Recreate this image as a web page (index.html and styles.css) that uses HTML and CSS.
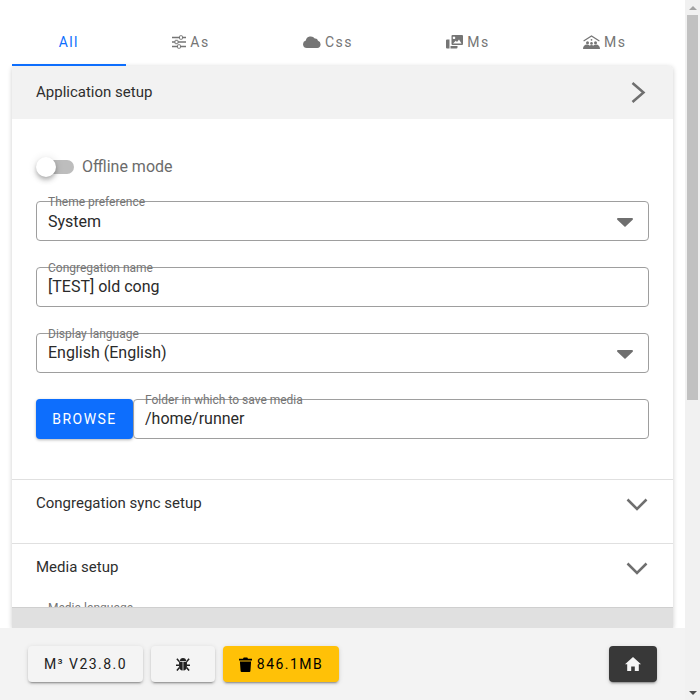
FILE: index.html
```html
<!DOCTYPE html>
<html lang="en">
<head>
<meta charset="utf-8">
<title>Settings</title>
<link rel="stylesheet" href="styles.css">
</head>
<body>
<div class="window">
  <div class="main">
    <div class="scroll-area">
      <nav class="tabs">
        <div class="tab active"><span>All</span></div>
        <div class="tab">
          <svg class="tab-icon" viewBox="0 0 14 14"><path d="M0 2.500h7.500M10.500 2.500H14M0 7h3M6 7h8M0 11.500h5.500M8.500 11.500H14" fill="none" stroke="currentColor" stroke-width="1.400"/><rect x="7.500" y=".8" width="3" height="3.400" rx=".6" fill="none" stroke="currentColor"/><rect x="3" y="5.300" width="3" height="3.400" rx=".6" fill="none" stroke="currentColor"/><rect x="5.500" y="9.800" width="3" height="3.400" rx=".6" fill="none" stroke="currentColor"/></svg>
          <span>As</span>
        </div>
        <div class="tab">
          <svg class="tab-icon cloud" viewBox="0 0 18 12"><path d="M3.800 12a3.800 3.800 0 0 1-1-7.450A5 5 0 0 1 11.800 2.600a3 3 0 0 1 3.200 2.200A3.700 3.700 0 0 1 14.300 12z" fill="currentColor"/></svg>
          <span>Css</span>
        </div>
        <div class="tab">
          <svg class="tab-icon wide" viewBox="0 0 17 14"><path d="M0 5.500A1 1 0 0 1 1 4.500h2.500v9H1a1 1 0 0 1-1-1zM4.500 11h7v1.500a1 1 0 0 1-1 1h-6z" fill="currentColor"/><path fill-rule="evenodd" d="M5.500 1a1 1 0 0 1 1-1H16a1 1 0 0 1 1 1v8a1 1 0 0 1-1 1H6.500a1 1 0 0 1-1-1zM7 8.500h8.500L13 4.500 11 7 9.800 5.800zM8 1.500a1.300 1.300 0 1 0 .01 0z" fill="currentColor"/></svg>
          <span>Ms</span>
        </div>
        <div class="tab">
          <svg class="tab-icon wide" viewBox="0 0 17 14"><path d="M.6 6 8.500 1l7.900 5" fill="none" stroke="currentColor" stroke-width="1.200"/><circle cx="8.500" cy="4.800" r=".9" fill="currentColor"/><circle cx="4.500" cy="7.800" r="1.500" fill="currentColor"/><circle cx="12.500" cy="7.800" r="1.500" fill="currentColor"/><circle cx="8.500" cy="8.400" r="1.300" fill="currentColor"/><path d="M0 14c0-2.800 1.800-4.500 4-4.500s4 1.700 4 4.500zM9 14c0-2.800 1.800-4.500 4-4.500s4 1.700 4 4.500zM5.500 14c0-2.800 1.300-4 3-4s3 1.200 3 4z" fill="currentColor"/></svg>
          <span>Ms</span>
        </div>
      </nav>
      <div class="accordion">
        <section class="panel">
          <header class="panel-head shaded">
            <h2>Application setup</h2>
            <svg class="chevron" viewBox="0 0 24 24"><path d="M7.500 3 18.500 12.500 7.500 22" fill="none" stroke="currentColor" stroke-width="2.500"/></svg>
          </header>
          <div class="panel-body">
            <div class="switch-row">
              <div class="switch"><span class="knob"></span></div>
              <span class="switch-label">Offline mode</span>
            </div>
            <div class="field">
              <span class="field-label">Theme preference</span>
              <span class="field-value lowered">System</span>
              <svg class="caret" viewBox="0 0 16 9"><path d="M1 0h14a1 1 0 0 1 .7 1.700L8 9 .3 1.700A1 1 0 0 1 1 0z" fill="currentColor"/></svg>
            </div>
            <div class="field">
              <span class="field-label">Congregation name</span>
              <span class="field-value">[TEST] old cong</span>
            </div>
            <div class="field">
              <span class="field-label">Display language</span>
              <span class="field-value">English (English)</span>
              <svg class="caret" viewBox="0 0 16 9"><path d="M1 0h14a1 1 0 0 1 .7 1.700L8 9 .3 1.700A1 1 0 0 1 1 0z" fill="currentColor"/></svg>
            </div>
            <div class="field-group">
              <button class="browse" type="button">BROWSE</button>
              <div class="field grow">
                <span class="field-label">Folder in which to save media</span>
                <span class="field-value">/home/runner</span>
              </div>
            </div>
          </div>
        </section>
        <section class="panel fixed">
          <header class="panel-head compact">
            <h2>Congregation sync setup</h2>
            <svg class="chevron" viewBox="0 0 24 24"><path d="M2.500 7.500 12 17l9.500-9.500" fill="none" stroke="currentColor" stroke-width="2.500"/></svg>
          </header>
        </section>
        <section class="panel fixed">
          <header class="panel-head compact">
            <h2>Media setup</h2>
            <svg class="chevron" viewBox="0 0 24 24"><path d="M2.500 7.500 12 17l9.500-9.500" fill="none" stroke="currentColor" stroke-width="2.500"/></svg>
          </header>
          <div class="clipped-label"><span class="field-label">Media language</span></div>
        </section>
        <div class="accordion-foot"></div>
      </div>
    </div>
    <footer class="footer">
      <div class="footer-left">
        <button class="btn light version" type="button">M³ V23.8.0</button>
        <button class="btn light bug" type="button" aria-label="Debug">
          <svg class="btn-icon" viewBox="0 0 16 16"><path d="M4.500 4.500a3.500 3.500 0 0 1 7 0z" fill="currentColor"/><path d="M3.500 5.500h4.100V15.500C5 15.300 3.500 13 3.500 10.500zM8.400 5.500h4.100v5c0 2.500-1.500 4.800-4.100 5z" fill="currentColor"/><path d="M1 2 4 5.500M15 2 12 5.500M0 9.300h3.800M12.200 9.300H16M1 15.500 4 12M15 15.500 12 12" fill="none" stroke="currentColor" stroke-width="1.700"/></svg>
        </button>
        <button class="btn amber" type="button">
          <svg class="trash" viewBox="0 0 13 15"><path d="M0 1.700h4L4.700.4h3.600l.7 1.300h4v1.700H0zM.9 4.400h11.200l-.7 9.700a1 1 0 0 1-1 .9H2.600a1 1 0 0 1-1-.9z" fill="currentColor"/></svg>
          <span>846.1MB</span>
        </button>
      </div>
      <button class="btn dark" type="button" aria-label="Home">
        <svg class="home" viewBox="0 0 16 14"><path d="M8 0 16 7.200h-2.200V14H9.800V9.500H6.200V14H2.200V7.200H0z" fill="currentColor"/></svg>
      </button>
    </footer>
  </div>
  <div class="scrollbar">
    <span class="arrow up"></span>
    <div class="track"><div class="thumb"></div></div>
    <span class="arrow down"></span>
  </div>
</div>
</body>
</html>
```

FILE: styles.css
```css
* { box-sizing: border-box; }
html, body { margin: 0; height: 100%; overflow: hidden; }
body { font-family: Roboto, "Liberation Sans", sans-serif; color: #212121; background: #fff; }
button { font-family: inherit; border: 0; cursor: pointer; }

.window { display: flex; width: 700px; height: 700px; }
.main { width: 685px; height: 700px; display: flex; flex-direction: column; }
.scroll-area { height: 628px; overflow: hidden; padding: 18px 12px 0; }

.tabs { display: flex; height: 48px; }
.tab {
  flex: 1 1 auto; display: flex; align-items: center; justify-content: center; gap: 4px;
  color: #757575; font-size: 14px; font-weight: 450; letter-spacing: 1.45px;
  border-bottom: 2px solid transparent; padding-top: 2px;
}
.tab.active { color: #0d6efd; border-bottom-color: #0d6efd; }
.tab-icon { width: 14px; height: 14px; }
.tab-icon.cloud { width: 18px; height: 12px; }
.tab-icon.wide { width: 17px; height: 14px; }

.accordion { border-radius: 4px 4px 0 0; box-shadow: 0 1px 5px rgba(0,0,0,.2); display: flex; flex-direction: column; height: 562px; overflow: hidden; background: #e0e0e0; }
.panel { background: #fff; }
.panel + .panel { border-top: 1px solid #e0e0e0; }
.panel.fixed { height: 64px; overflow: hidden; }
.panel-head { display: flex; align-items: center; justify-content: space-between; height: 53px; padding: 0 24px 1px; }
.panel-head.compact { height: 48px; padding-bottom: 0; }
.panel-head.compact h2 { padding-bottom: 2px; }
.panel-head.shaded { background: #f2f2f2; }
.panel-head h2 { margin: 0; font-size: 15px; font-weight: 400; line-height: 24px; color: #2e2e2e; }
.chevron { width: 24px; height: 24px; color: #6f6f6f; }
.panel-body { padding: 32px 24px 40px; }

.switch-row { display: flex; align-items: center; height: 32px; margin-bottom: 18px; }
.switch { position: relative; width: 36px; height: 14px; border-radius: 7px; background: #bdbdbd; margin: 0 8px 0 2px; }
.knob { position: absolute; left: -2px; top: -3px; width: 20px; height: 20px; border-radius: 50%; background: #fff; box-shadow: 0 2px 4px -1px rgba(0,0,0,.2), 0 4px 5px rgba(0,0,0,.14), 0 1px 10px rgba(0,0,0,.12); }
.switch-label { font-size: 16px; color: #6b6b6b; padding-bottom: 2px; }

.field { position: relative; height: 40px; border: 1px solid #9e9e9e; border-radius: 4px; padding: 0 11px; display: flex; align-items: center; margin-bottom: 26px; }
.field-label { position: absolute; left: 11px; top: -7px; font-size: 12px; line-height: 14px; color: #757575; white-space: nowrap; }
.field-value { font-size: 16px; line-height: 24px; color: #2a2a2a; }
.field-value.lowered { padding-top: 2px; }
.caret { position: absolute; right: 15px; top: 16px; width: 16px; height: 9px; color: #6f6f6f; }

.field-group { display: flex; }
.field-group .field { margin-bottom: 0; }
.field.grow { flex: 1; border-radius: 4px; }
.browse { width: 97px; height: 40px; border-radius: 4px; background: #0d6efd; color: #fff; font-size: 14px; font-weight: 450; letter-spacing: 1.45px; box-shadow: 0 1px 3px rgba(0,0,0,.3); }

.clipped-label { position: relative; height: 1px; }
.clipped-label .field-label { left: 36px; top: 9px; }
.accordion-foot { flex: 1; border-top: 1px solid #cfcfcf; background: #e0e0e0; }

.footer { height: 72px; background: #f3f3f3; display: flex; align-items: center; justify-content: space-between; padding: 0 28px; }
.footer-left { display: flex; gap: 8px; }
.btn { height: 36px; border-radius: 4px; font-size: 14px; font-weight: 450; letter-spacing: 1.45px; display: flex; align-items: center; justify-content: center; box-shadow: 0 3px 1px -2px rgba(0,0,0,.2), 0 2px 2px rgba(0,0,0,.14), 0 1px 5px rgba(0,0,0,.12); }
.btn.light { background: #f4f4f4; color: #212121; }
.version { width: 115px; }
.bug { width: 64px; }
.btn.amber { width: 116px; background: #ffc107; color: #000; gap: 5px; }
.btn.dark { width: 48px; background: #383838; color: #f5f5f5; }
.btn-icon { width: 14px; height: 14px; }
.trash { width: 13px; height: 15px; }
.home { width: 16px; height: 14px; }

.scrollbar { width: 15px; height: 700px; background: #f1f1f1; display: flex; flex-direction: column; align-items: center; }
.arrow { width: 0; height: 0; border-left: 4px solid transparent; border-right: 4px solid transparent; flex: none; }
.arrow.up { border-bottom: 4px solid #a3a3a3; margin: 6px 0 5px; }
.arrow.down { border-top: 4px solid #505050; margin: 6px 0 5px; }
.track { flex: 1; width: 100%; padding: 0 2px; }
.thumb { width: 100%; height: 385px; background: #c1c1c1; }
```
